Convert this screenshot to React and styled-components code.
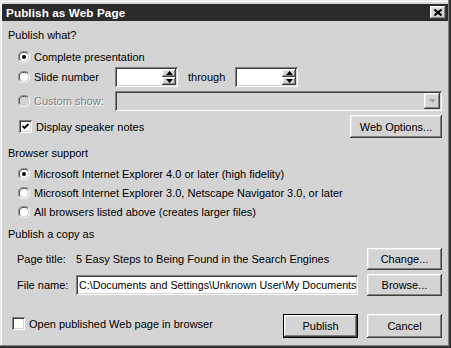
import React from "react";
import styled, { createGlobalStyle } from "styled-components";

const GlobalStyle = createGlobalStyle`
  html, body {
    margin: 0;
    padding: 0;
    background: #d4d4d4;
  }
  body {
    font-family: "Liberation Sans", Arial, sans-serif;
    font-size: 11px;
    color: #000;
  }
`;

const raised = `
  background: #d4d4d4;
  box-shadow: inset -1px -1px #404040, inset 1px 1px #ffffff,
    inset -2px -2px #808080, inset 2px 2px #e4e4e4;
`;

const sunken = `
  box-shadow: inset 1px 1px #808080, inset -1px -1px #ffffff,
    inset 2px 2px #404040, inset -2px -2px #d4d4d4;
`;

const Window = styled.div`
  width: 451px;
  height: 348px;
  box-sizing: border-box;
  background: #d4d4d4;
  padding: 4px 4px 4px 2px;
  box-shadow: inset -1px -1px #2a2a2a, inset -2px -2px #3a3a3a,
    inset -3px -3px #808080, inset 1px 1px #e8e8e8, inset 2px 2px #ffffff;
  display: flex;
  flex-direction: column;
`;

const TitleBar = styled.div`
  height: 17px;
  background: #2b2b2b;
  display: flex;
  align-items: center;
  justify-content: space-between;
  padding: 0 2px 0 4px;
  margin-right: -1px;
`;

const TitleText = styled.span`
  color: #fff;
  font-weight: bold;
  font-size: 11.7px;
  letter-spacing: 0.1px;
`;

const CloseButton = styled.div`
  ${raised}
  width: 16px;
  height: 13px;
  display: flex;
  align-items: center;
  justify-content: center;
`;

const Body = styled.div`
  display: flex;
  flex-direction: column;
  padding: 0 5px 0 6px;
`;

const Row = styled.div`
  display: flex;
  align-items: center;
  height: ${(p) => p.$h || 18}px;
  margin-top: ${(p) => p.$mt || 0}px;
  padding-left: ${(p) => p.$pl || 0}px;
`;

const Heading = styled.span`
  white-space: nowrap;
`;

const Label = styled.span`
  white-space: nowrap;
  width: ${(p) => (p.$w ? `${p.$w}px` : "auto")};
  flex: none;
  margin-left: ${(p) => p.$ml || 0}px;
  color: ${(p) => (p.$disabled ? "#808080" : "#000")};
  text-shadow: ${(p) => (p.$disabled ? "1px 1px #ffffff" : "none")};
`;

const Spacer = styled.div`
  flex: 1;
`;

const Radio = styled.span`
  width: 12px;
  height: 12px;
  flex: none;
  margin-right: 4px;
  display: inline-flex;
`;

const Check = styled.span`
  width: 13px;
  height: 13px;
  flex: none;
  margin-right: 4px;
  box-sizing: border-box;
  background: #fff;
  ${sunken}
  display: inline-flex;
  align-items: center;
  justify-content: center;
`;

const SpinBox = styled.div`
  width: 63px;
  height: 20px;
  box-sizing: border-box;
  background: #fff;
  ${sunken}
  display: flex;
  justify-content: flex-end;
  padding: 2px;
`;

const SpinButtons = styled.div`
  width: 14px;
  display: flex;
  flex-direction: column;
`;

const SpinButton = styled.div`
  ${raised}
  flex: 1;
  display: flex;
  align-items: center;
  justify-content: center;
`;

const Combo = styled.div`
  flex: 1;
  height: 20px;
  box-sizing: border-box;
  ${sunken}
  display: flex;
  justify-content: flex-end;
  padding: 2px;
`;

const ComboButton = styled.div`
  ${raised}
  width: 16px;
  display: flex;
  align-items: center;
  justify-content: center;
`;

const TextField = styled.div`
  width: ${(p) => p.$w}px;
  height: 20px;
  box-sizing: border-box;
  background: #fff;
  ${sunken}
  padding: 0 0 0 3px;
  display: flex;
  align-items: center;
  overflow: hidden;
  white-space: nowrap;
  font-size: 10.7px;
`;

const Button = styled.div`
  ${raised}
  width: ${(p) => p.$w}px;
  height: ${(p) => p.$h || 23}px;
  box-sizing: border-box;
  display: flex;
  align-items: center;
  justify-content: center;
  white-space: nowrap;
  flex: none;
  margin-left: ${(p) => p.$ml || 0}px;
  ${(p) => p.$default && `border: 1px solid #000;`}
`;

const BottomRow = styled(Row)`
  align-items: flex-start;
`;

const CheckWrap = styled.div`
  display: flex;
  align-items: center;
  margin-top: 3px;
`;

const RadioIcon = ({ checked, disabled }) => (
  <Radio>
    <svg width="12" height="12" viewBox="0 0 12 12">
      <path d="M10.5 2.2 A5.5 5.5 0 0 0 1.5 9.8" stroke="#808080" fill="none" />
      <path d="M9.6 3 A4.5 4.5 0 0 0 2.4 9" stroke="#404040" fill="none" />
      <circle cx="6" cy="6" r="4" fill={disabled ? "#d4d4d4" : "#fff"} />
      <path d="M1.5 9.8 A5.5 5.5 0 0 0 10.5 2.2" stroke="#fff" fill="none" />
      <path d="M2.4 9 A4.5 4.5 0 0 0 9.6 3" stroke="#d4d4d4" fill="none" />
      {checked && <circle cx="6" cy="6" r="2" fill="#000" />}
    </svg>
  </Radio>
);

const CheckIcon = ({ checked }) => (
  <Check>
    {checked && (
      <svg width="9" height="9" viewBox="0 0 9 9">
        <path d="M1.5 4 L3.5 6 L7.5 2" stroke="#000" strokeWidth="1.8" fill="none" />
      </svg>
    )}
  </Check>
);

const Arrow = ({ up, color = "#000" }) => (
  <svg width="7" height="4" viewBox="0 0 7 4">
    <path d={up ? "M0 4 L3.5 0 L7 4 Z" : "M0 0 L7 0 L3.5 4 Z"} fill={color} />
  </svg>
);

const Spin = () => (
  <SpinBox>
    <SpinButtons>
      <SpinButton>
        <Arrow up />
      </SpinButton>
      <SpinButton>
        <Arrow />
      </SpinButton>
    </SpinButtons>
  </SpinBox>
);

export default function App() {
  return (
    <>
      <GlobalStyle />
      <Window>
        <TitleBar>
          <TitleText>Publish as Web Page</TitleText>
          <CloseButton>
            <svg width="8" height="7" viewBox="0 0 8 7">
              <path d="M0.5 0.5 L7.5 6.5 M7.5 0.5 L0.5 6.5" stroke="#000" strokeWidth="2" />
            </svg>
          </CloseButton>
        </TitleBar>
        <Body>
          <Row $mt={5}>
            <Heading>Publish what?</Heading>
          </Row>
          <Row $mt={4} $pl={10}>
            <RadioIcon checked />
            <Label>Complete presentation</Label>
          </Row>
          <Row $mt={1} $h={20} $pl={10}>
            <RadioIcon />
            <Label $w={81}>Slide number</Label>
            <Spin />
            <Label $w={47} $ml={10}>through</Label>
            <Spin />
          </Row>
          <Row $mt={4} $h={20} $pl={10}>
            <RadioIcon disabled />
            <Label $w={81} $disabled>Custom show:</Label>
            <Combo>
              <ComboButton>
                <Arrow color="#a0a0a0" />
              </ComboButton>
            </Combo>
          </Row>
          <Row $mt={4} $h={23} $pl={11}>
            <CheckIcon checked />
            <Label>Display speaker notes</Label>
            <Spacer />
            <Button $w={92}>Web Options...</Button>
          </Row>
          <Row $mt={6}>
            <Heading>Browser support</Heading>
          </Row>
          <Row $mt={3} $pl={10}>
            <RadioIcon checked />
            <Label>Microsoft Internet Explorer 4.0 or later (high fidelity)</Label>
          </Row>
          <Row $mt={1} $pl={10}>
            <RadioIcon />
            <Label>Microsoft Internet Explorer 3.0, Netscape Navigator 3.0, or later</Label>
          </Row>
          <Row $mt={1} $pl={10}>
            <RadioIcon />
            <Label>All browsers listed above (creates larger files)</Label>
          </Row>
          <Row $mt={4}>
            <Heading>Publish a copy as</Heading>
          </Row>
          <Row $mt={5} $h={22} $pl={9}>
            <Label $w={59}>Page title:</Label>
            <Label>5 Easy Steps to Being Found in the Search Engines</Label>
            <Spacer />
            <Button $w={75} $h={22}>Change...</Button>
          </Row>
          <Row $mt={4} $h={22} $pl={9}>
            <Label $w={59}>File name:</Label>
            <TextField $w={282}>
              C:\Documents and Settings\Unknown User\My Documents
            </TextField>
            <Spacer />
            <Button $w={75} $h={22}>Browse...</Button>
          </Row>
          <BottomRow $mt={18} $h={24} $pl={4}>
            <CheckWrap>
              <CheckIcon />
              <Label>Open published Web page in browser</Label>
            </CheckWrap>
            <Spacer />
            <Button $w={75} $h={24} $default>Publish</Button>
            <Button $w={75} $h={24} $ml={9}>Cancel</Button>
          </BottomRow>
        </Body>
      </Window>
    </>
  );
}
